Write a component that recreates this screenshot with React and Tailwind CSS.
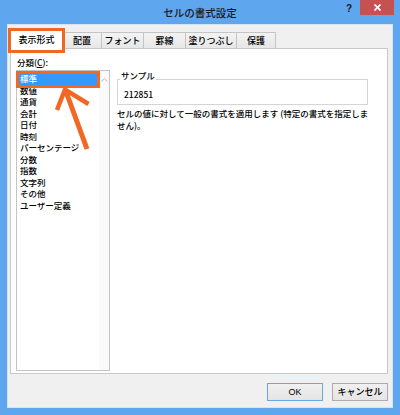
import React from 'react';

const categories = ['標準', '数値', '通貨', '会計', '日付', '時刻', 'パーセンテージ', '分数', '指数', '文字列', 'その他', 'ユーザー定義'];

const tabs = [
  { label: '配置', w: 'w-[39px]' },
  { label: 'フォント', w: 'w-[42px]' },
  { label: '罫線', w: 'w-[42px]' },
  { label: '塗りつぶし', w: 'w-[51px]' },
  { label: '保護', w: 'w-[39px]' },
];

const App = () => {
  return (
    <div className="relative w-[400px] h-[415px] bg-[#5ea6ee] flex flex-col overflow-hidden text-black font-medium font-['Noto_Sans_CJK_JP','Noto_Sans',sans-serif]">
      {/* Title bar */}
      <div className="h-[24px] grid grid-cols-[1fr_auto_1fr] shrink-0">
        <div />
        <div className="text-[10.5px] leading-[24px] pt-[1px] text-[#1a1a1a]">セルの書式設定</div>
        <div className="flex justify-end items-start pr-[6px]">
          <span className="text-[10px] font-bold leading-[17px] mr-[8px] text-[#1a1a1a] font-['Liberation_Sans',sans-serif]">?</span>
          <div className="w-[34px] h-[15px] bg-[#c75050] flex items-center justify-center">
            <svg width="7" height="7" viewBox="0 0 7 7">
              <path d="M0.5 0.5 L6.5 6.5 M6.5 0.5 L0.5 6.5" stroke="#ffffff" strokeWidth="1.7" />
            </svg>
          </div>
        </div>
      </div>

      {/* Client area */}
      <div className="mx-[7px] mb-[7px] flex-1 bg-[#f0f0f0] border border-[#d4e4f5] flex flex-col">
        {/* Tabs */}
        <div className="flex items-end h-[24px] pl-[2px] relative z-10 shrink-0">
          <div className="relative w-[53px] h-[19px] bg-white border-l border-t border-r border-[#c9c9c9] flex items-center justify-center text-[9px] leading-[12px]">
            表示形式
            <div className="absolute left-[-3px] top-[-3px] w-[57px] h-[25px] border-[3px] border-[#f26722]" />
          </div>
          {tabs.map((t) => (
            <div
              key={t.label}
              className={`${t.w} h-[16px] mb-[1px] bg-gradient-to-b from-[#f3f3f3] to-[#e7e7e7] border-t border-r border-[#c4c4c4] flex items-center justify-center text-[9px] leading-[12px] pt-[1px]`}
            >
              {t.label}
            </div>
          ))}
        </div>

        {/* Tab panel */}
        <div className="-mt-px ml-[2px] mr-[4px] h-[326px] shrink-0 bg-white border border-[#c9c9c9] flex">
          {/* Category column */}
          <div className="ml-[5px] pt-[7px] flex flex-col">
            <div className="pl-[1px] text-[8.5px] leading-[12px]">
              分類(<span className="underline">C</span>):
            </div>
            <div className="mt-[2px] w-[94px] h-[301px] border border-[#c4c4c4] bg-white flex">
              <div className="flex-1 pt-[2px] pl-[2px] pr-[2px]">
                {categories.map((c, i) =>
                  i === 0 ? (
                    <div key={c} className="relative h-[11.5px] bg-[#3399ff] text-white text-[8.5px] leading-[11.5px] pl-[1px]">
                      {c}
                      <div className="absolute left-[-3px] top-[-2px] right-[-3px] bottom-[-3px] border-[3px] border-[#f26722]" />
                    </div>
                  ) : (
                    <div key={c} className="h-[11.5px] text-[8.5px] leading-[11.5px] pl-[1px] whitespace-nowrap">
                      {c}
                    </div>
                  )
                )}
              </div>
              <div className="w-[10px] bg-[#fafafa] flex justify-center pt-[7px]">
                <svg width="7" height="4" viewBox="0 0 7 4">
                  <path d="M0.5 3.5 L3.5 0.5 L6.5 3.5" stroke="#bdbdbd" strokeWidth="1" fill="none" />
                </svg>
              </div>
            </div>
          </div>

          {/* Sample + description */}
          <div className="ml-[7px] flex flex-col">
            <div className="relative mt-[30px] w-[251px] h-[26px] border border-[#d5d5d5]">
              <span className="absolute left-[2px] top-[-11px] bg-white px-[1px] text-[8.5px] leading-[12px]">サンプル</span>
              <div className="pl-[6px] pt-[8px] text-[8.5px] leading-[12px]">212851</div>
            </div>
            <div className="mt-[2px] text-[8.5px] leading-[12px] whitespace-nowrap">
              セルの値に対して一般の書式を適用します (特定の書式を指定しま
              <br />
              せん)。
            </div>
          </div>
        </div>

        {/* Buttons */}
        <div className="mt-[9px] flex justify-end gap-[9px] pr-[4px]">
          <button className="w-[56px] h-[18px] border border-[#6aa6e0] bg-gradient-to-b from-[#f0f0f0] to-[#e5e5e5] text-[9px] leading-[12px] font-['Liberation_Sans','Noto_Sans_CJK_JP',sans-serif]">
            OK
          </button>
          <button className="w-[56px] h-[18px] border border-[#adadad] bg-gradient-to-b from-[#f0f0f0] to-[#e5e5e5] text-[9px] leading-[12px]">
            キャンセル
          </button>
        </div>
      </div>

      {/* Annotation arrow */}
      <svg className="absolute left-0 top-0 pointer-events-none" width="400" height="415" viewBox="0 0 400 415">
        <path d="M87 149 L66.5 93" stroke="#f26722" strokeWidth="5" fill="none" />
        <path d="M57 110 L65 89.5 L88.5 104" stroke="#f26722" strokeWidth="4.5" fill="none" strokeLinejoin="miter" />
      </svg>
    </div>
  );
};

export default App;
